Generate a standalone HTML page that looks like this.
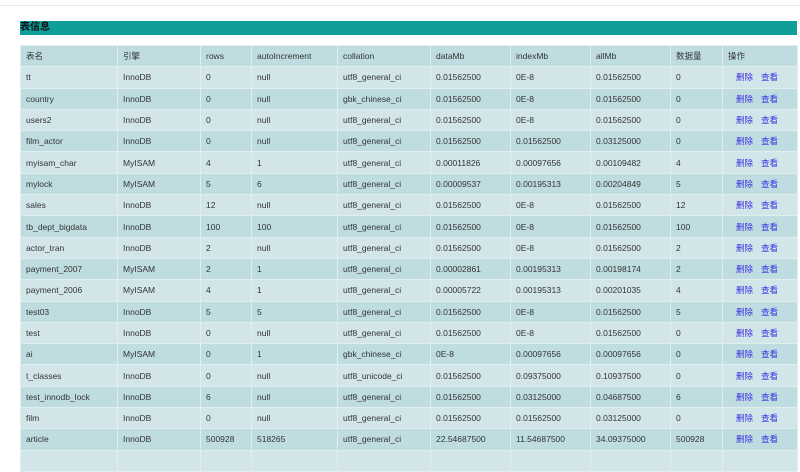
<!DOCTYPE html><html><head><meta charset="utf-8"><style>
body{margin:0;width:800px;height:454px;overflow:hidden;background:#fff;font-family:"Liberation Sans","Noto Sans CJK SC",sans-serif;}
.top{position:absolute;left:0;top:5px;width:800px;height:1px;background:#e6e6e6}
.bar{position:absolute;left:20px;top:21px;width:777px;height:14px;background:#0f9e99;overflow:hidden}
.bar span{position:absolute;left:0;top:1px;font-size:10px;font-weight:bold;line-height:12px;color:#111}
table{position:absolute;left:20px;top:45px;width:777px;border-collapse:collapse;table-layout:fixed;font-size:8.5px;color:#333}
td{height:20.3px;border:1px solid #e0eef0;padding:0 0 0 5px;white-space:nowrap;overflow:hidden}
tr:nth-child(odd){background:#bfdde1}
tr:nth-child(even){background:#d2e6e9}
a{color:#3a2ee0;margin-left:8px;margin-right:4px;text-decoration:none}
</style></head><body><div class="top"></div><div class="bar"><span>表信息</span></div>
<table><colgroup><col style="width:97px"><col style="width:83px"><col style="width:51px"><col style="width:86px"><col style="width:93px"><col style="width:80px"><col style="width:80px"><col style="width:80px"><col style="width:52px"><col style="width:75px"></colgroup>
<tr><td>表名</td><td>引擎</td><td>rows</td><td>autoIncrement</td><td>collation</td><td>dataMb</td><td>indexMb</td><td>allMb</td><td>数据量</td><td>操作</td></tr>
<tr><td>tt</td><td>InnoDB</td><td>0</td><td>null</td><td>utf8_general_ci</td><td>0.01562500</td><td>0E-8</td><td>0.01562500</td><td>0</td><td><a>删除</a><a style="margin-left:4px">查看</a></td></tr>
<tr><td>country</td><td>InnoDB</td><td>0</td><td>null</td><td>gbk_chinese_ci</td><td>0.01562500</td><td>0E-8</td><td>0.01562500</td><td>0</td><td><a>删除</a><a style="margin-left:4px">查看</a></td></tr>
<tr><td>users2</td><td>InnoDB</td><td>0</td><td>null</td><td>utf8_general_ci</td><td>0.01562500</td><td>0E-8</td><td>0.01562500</td><td>0</td><td><a>删除</a><a style="margin-left:4px">查看</a></td></tr>
<tr><td>film_actor</td><td>InnoDB</td><td>0</td><td>null</td><td>utf8_general_ci</td><td>0.01562500</td><td>0.01562500</td><td>0.03125000</td><td>0</td><td><a>删除</a><a style="margin-left:4px">查看</a></td></tr>
<tr><td>myisam_char</td><td>MyISAM</td><td>4</td><td>1</td><td>utf8_general_ci</td><td>0.00011826</td><td>0.00097656</td><td>0.00109482</td><td>4</td><td><a>删除</a><a style="margin-left:4px">查看</a></td></tr>
<tr><td>mylock</td><td>MyISAM</td><td>5</td><td>6</td><td>utf8_general_ci</td><td>0.00009537</td><td>0.00195313</td><td>0.00204849</td><td>5</td><td><a>删除</a><a style="margin-left:4px">查看</a></td></tr>
<tr><td>sales</td><td>InnoDB</td><td>12</td><td>null</td><td>utf8_general_ci</td><td>0.01562500</td><td>0E-8</td><td>0.01562500</td><td>12</td><td><a>删除</a><a style="margin-left:4px">查看</a></td></tr>
<tr><td>tb_dept_bigdata</td><td>InnoDB</td><td>100</td><td>100</td><td>utf8_general_ci</td><td>0.01562500</td><td>0E-8</td><td>0.01562500</td><td>100</td><td><a>删除</a><a style="margin-left:4px">查看</a></td></tr>
<tr><td>actor_tran</td><td>InnoDB</td><td>2</td><td>null</td><td>utf8_general_ci</td><td>0.01562500</td><td>0E-8</td><td>0.01562500</td><td>2</td><td><a>删除</a><a style="margin-left:4px">查看</a></td></tr>
<tr><td>payment_2007</td><td>MyISAM</td><td>2</td><td>1</td><td>utf8_general_ci</td><td>0.00002861</td><td>0.00195313</td><td>0.00198174</td><td>2</td><td><a>删除</a><a style="margin-left:4px">查看</a></td></tr>
<tr><td>payment_2006</td><td>MyISAM</td><td>4</td><td>1</td><td>utf8_general_ci</td><td>0.00005722</td><td>0.00195313</td><td>0.00201035</td><td>4</td><td><a>删除</a><a style="margin-left:4px">查看</a></td></tr>
<tr><td>test03</td><td>InnoDB</td><td>5</td><td>5</td><td>utf8_general_ci</td><td>0.01562500</td><td>0E-8</td><td>0.01562500</td><td>5</td><td><a>删除</a><a style="margin-left:4px">查看</a></td></tr>
<tr><td>test</td><td>InnoDB</td><td>0</td><td>null</td><td>utf8_general_ci</td><td>0.01562500</td><td>0E-8</td><td>0.01562500</td><td>0</td><td><a>删除</a><a style="margin-left:4px">查看</a></td></tr>
<tr><td>ai</td><td>MyISAM</td><td>0</td><td>1</td><td>gbk_chinese_ci</td><td>0E-8</td><td>0.00097656</td><td>0.00097656</td><td>0</td><td><a>删除</a><a style="margin-left:4px">查看</a></td></tr>
<tr><td>t_classes</td><td>InnoDB</td><td>0</td><td>null</td><td>utf8_unicode_ci</td><td>0.01562500</td><td>0.09375000</td><td>0.10937500</td><td>0</td><td><a>删除</a><a style="margin-left:4px">查看</a></td></tr>
<tr><td>test_innodb_lock</td><td>InnoDB</td><td>6</td><td>null</td><td>utf8_general_ci</td><td>0.01562500</td><td>0.03125000</td><td>0.04687500</td><td>6</td><td><a>删除</a><a style="margin-left:4px">查看</a></td></tr>
<tr><td>film</td><td>InnoDB</td><td>0</td><td>null</td><td>utf8_general_ci</td><td>0.01562500</td><td>0.01562500</td><td>0.03125000</td><td>0</td><td><a>删除</a><a style="margin-left:4px">查看</a></td></tr>
<tr><td>article</td><td>InnoDB</td><td>500928</td><td>518265</td><td>utf8_general_ci</td><td>22.54687500</td><td>11.54687500</td><td>34.09375000</td><td>500928</td><td><a>删除</a><a style="margin-left:4px">查看</a></td></tr>
<tr><td>&nbsp;</td><td></td><td></td><td></td><td></td><td></td><td></td><td></td><td></td><td></td></tr>
</table></body></html>
